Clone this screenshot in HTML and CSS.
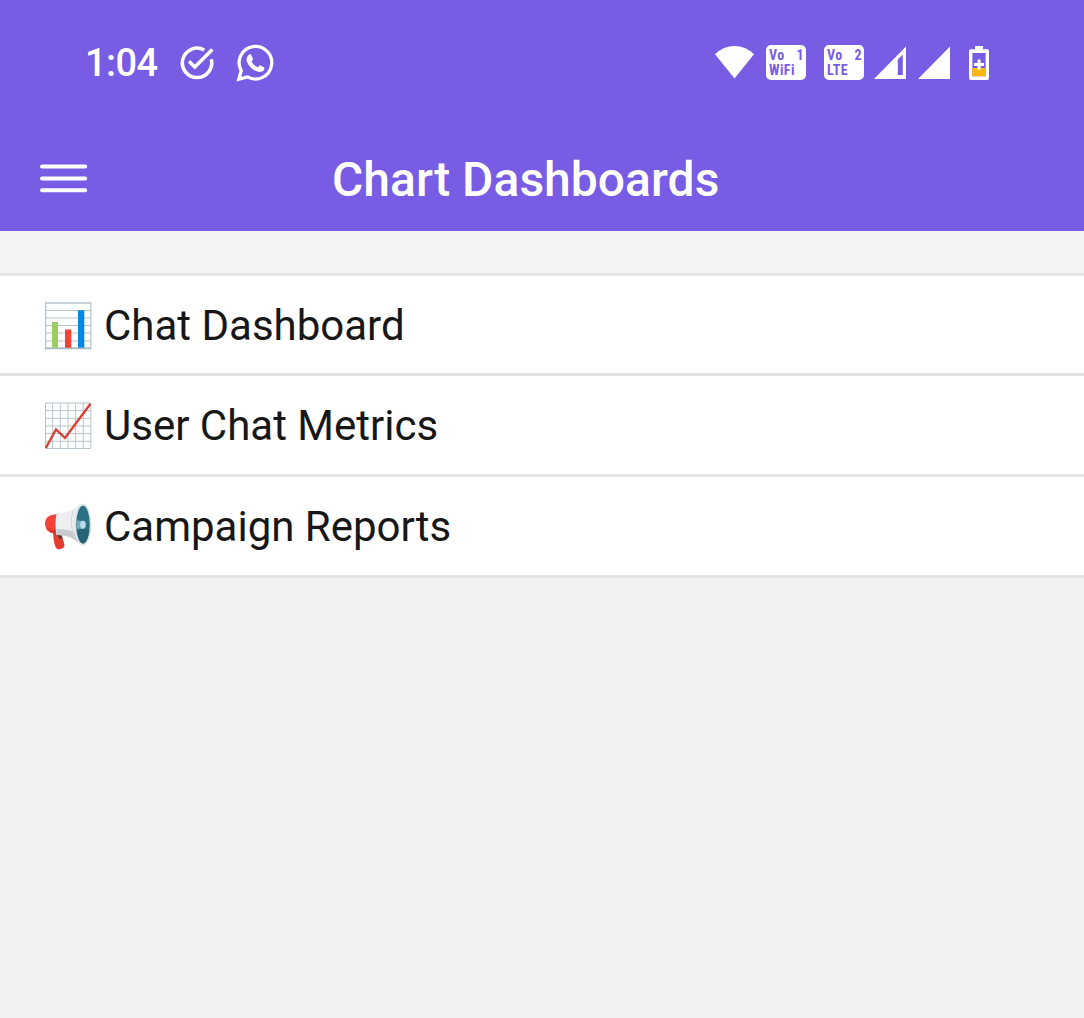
FILE: index.html
```html
<!DOCTYPE html>
<html lang="en">
<head>
<meta charset="utf-8">
<title>Chart Dashboards</title>
<link rel="stylesheet" href="styles.css">
</head>
<body>
<header class="header">
  <div class="status">
    <div class="status-left">
      <span class="clock">1:04</span>
      <svg class="check" width="36" height="36" viewBox="0 0 36 36" fill="none" stroke="#fff" stroke-width="3.5">
        <path d="M25.2 5A14.7 14.7 0 1 0 32.3 14.2"/>
        <path d="M10 16.2L15.8 22L33.3 4.4"/>
      </svg>
      <svg class="whatsapp" width="38" height="38" viewBox="0 0 38 38">
        <path d="M2.8 35.2L5.2 26.6A16.3 16.3 0 1 1 11.5 32.9Z" fill="none" stroke="#fff" stroke-width="3.3"/>
        <path d="M12.8 10.7C13.3 10.1 14.8 10 15.3 11L17 15C17.3 15.7 15.6 17.2 15.5 17.6C16.9 20.3 18.9 22.1 21.6 23.3C22.2 23.4 23.3 21.2 24 21.3L28 23.2C28.9 23.7 28.2 25.9 27.5 26.6C25.8 28.2 23.5 28.3 21.4 27.6C16.3 25.8 12.8 22.4 11 18C9.9 15.2 11 12.2 12.8 10.7Z" fill="#fff"/>
      </svg>
    </div>
    <div class="status-right">
      <svg class="wifi" width="40" height="34" viewBox="0 0 40 34"><path d="M0 8.2Q8.5 0 19.5 0T39 8.2L19.5 32.5Z" fill="#fff"/></svg>
      <div class="badge"><span class="badge-top"><span>Vo</span><span>1</span></span><span>WiFi</span></div>
      <div class="badge badge-lte"><span class="badge-top"><span>Vo</span><span>2</span></span><span>LTE</span></div>
      <svg class="signal" width="33" height="33" viewBox="0 0 33 33"><path fill-rule="evenodd" d="M0 33L32 .4V33ZM23.8 13.5V29H28.8V8.5Z" fill="#fff"/></svg>
      <svg class="signal signal-two" width="33" height="33" viewBox="0 0 33 33"><path d="M0 33L32 .4V33Z" fill="#fff"/></svg>
      <svg class="battery" width="20" height="34" viewBox="0 0 20 34">
        <path fill-rule="evenodd" d="M6 0H14V3.3H18.5Q20 3.3 20 5V32Q20 34 18 34H2Q0 34 0 32V5Q0 3.3 1.7 3.3H6ZM3.4 7V30.3H16.6V7Z" fill="#fff"/>
        <path d="M3.2 22H16.8V30.3H3.2Z" fill="#fdb813"/>
        <path d="M8.6 13.5H11.6V17H15V20H11.6V23.5H8.6V20H5V17H8.6Z" fill="#fff"/>
      </svg>
    </div>
  </div>
  <div class="toolbar">
    <svg class="menu" width="48" height="30" viewBox="0 0 48 30" stroke="#fff" stroke-width="4" stroke-linecap="round"><path d="M2 3.6H45.2M2 15.5H45.2M2 27.3H45.2"/></svg>
    <h1 class="title">Chart Dashboards</h1>
  </div>
</header>
<main>
  <ul class="list">
    <li class="row">
      <svg class="icon" width="48" height="48" viewBox="0 0 48 48">
        <path d="M1.5 1H46.8V46.5H1.5Z" fill="#fdfefe" stroke="#b5c3cc" stroke-width="1.3"/>
        <path d="M1 8.5H47M1 16H47M1 23.5H47M1 31H47M1 39H47" stroke="#b9c5cd" stroke-width="1"/>
        <path d="M1 46.3H47" stroke="#a8b9c4" stroke-width="1.5"/>
        <path d="M8 20H14V45.7H8Z" fill="#9ccc65"/><path d="M21 27.5H27.3V45.7H21Z" fill="#f44336"/><path d="M34 8.3H40.3V45.7H34Z" fill="#0288e5"/>
      </svg><span class="label">Chat Dashboard</span>
    </li>
    <li class="row">
      <svg class="icon" width="48" height="48" viewBox="0 0 48 48">
        <path d="M1.5 1H46.8V46.5H1.5Z" fill="#fdfefe" stroke="#b5c3cc"/>
        <path d="M1 8.6H47M1 16.3H47M1 24H47M1 31.6H47M1 39.3H47M8.6 1V47M16.3 1V47M24 1V47M31.6 1V47M39.3 1V47" stroke="#b9c5cd" stroke-width="1"/>
        <path d="M1.8 46L12 27.5L21 36L46.5 1.8" fill="none" stroke="#db4038" stroke-width="2.4"/>
      </svg><span class="label">User Chat Metrics</span>
    </li>
    <li class="row">
      <svg class="icon" width="48" height="48" viewBox="0 0 48 48">
        <path d="M9 30L17 29L18 34Q20 39 20.6 43Q18 47 13 46Q10 44 9 30Z" fill="#e53b30"/>
        <path d="M13.5 32L18 31L18.5 35.5L15.5 36Z" fill="#5a3c3a"/>
        <path d="M15 10.5L6 12.5Q1 15 1 20.5Q1 26.5 6 29.5L15 31.5Z" fill="#f44336"/>
        <path d="M2.6 24.5Q5 28 8 30L15 31.5V27Q8 27 2.6 24.5Z" fill="#d7352d"/>
        <path d="M12.5 11Q26 10 37 1V42Q26 31 12.5 32Q10.5 21 12.5 11Z" fill="#eceeef"/>
        <path d="M12.3 26Q26 26 34 31L37 42Q26 31 12.5 32Z" fill="#c6cccf"/>
        <path d="M29 8Q25 21 31 35" fill="none" stroke="#cfd5d8" stroke-width="1"/>
        <ellipse cx="38.8" cy="21.6" rx="8.7" ry="21" fill="#dce5e8"/>
        <ellipse cx="39" cy="21.6" rx="6.8" ry="18.8" fill="#2c7182"/>
        <path d="M32.8 28Q39 24 45.4 28Q43 40.5 39 40.4Q34.5 39 32.8 28Z" fill="#256477"/>
        <path d="M32.6 17.5L39 18V26L32.6 25.5Z" fill="#76aabb"/>
        <ellipse cx="39" cy="21.8" rx="2.8" ry="4" fill="#b8deeb"/>
      </svg><span class="label">Campaign Reports</span>
    </li>
  </ul>
</main>
</body>
</html>
```
FILE: styles.css
```css
* { box-sizing: border-box; }
body {
  margin: 0;
  min-height: 1018px;
  background: #f1f1f1;
  font-family: Roboto, "Liberation Sans", sans-serif;
}
svg { display: block; flex: none; }
.header { height: 231px; background: #785ce4; color: #fff; }
.status {
  display: flex;
  justify-content: space-between;
  height: 126px;
  padding: 0 95px 0 85px;
}
.status-left, .status-right { display: flex; align-items: center; height: 126px; }
.clock { width: 94px; font-size: 38px; font-weight: 500; line-height: 44px; letter-spacing: -0.6px; white-space: nowrap; }
.whatsapp { margin-left: 21px; }
.badge {
  display: flex;
  flex-direction: column;
  justify-content: center;
  width: 40px;
  height: 35px;
  margin: 0 0 1px 11px;
  padding: 0 2px 0 3px;
  border-radius: 5px;
  background: #fff;
  color: #785ce4;
  font: 700 14px/14.5px Roboto, sans-serif;
  font-stretch: condensed;
  letter-spacing: 0.4px;
}
.badge-top { display: flex; justify-content: space-between; }
.badge-lte { margin-left: 18px; }
.signal { margin: 0 0 2px 10px; }
.signal-two { margin-left: 11px; }
.battery { margin-left: 18px; }
.toolbar { display: flex; align-items: center; height: 105px; padding-left: 40px; }
.menu { margin-bottom: 2px; }
.title { margin: 2px 0 0 244px; font-size: 48px; font-weight: 500; line-height: 60px; letter-spacing: 0.03px; white-space: nowrap; }
.list { margin: 0; padding: 42px 0 0; list-style: none; background: #f3f3f3; }
.row {
  display: flex;
  align-items: center;
  gap: 12px;
  height: 101px;
  padding: 2px 0 0 44px;
  border-top: 3px solid #e4e4e4;
  background: #fff;
  color: #171717;
  font-size: 42px;
  line-height: 50px;
  white-space: nowrap;
}
.row:first-child { height: 100px; }
.row:last-child { height: 104px; border-bottom: 3px solid #e4e4e4; }
```
